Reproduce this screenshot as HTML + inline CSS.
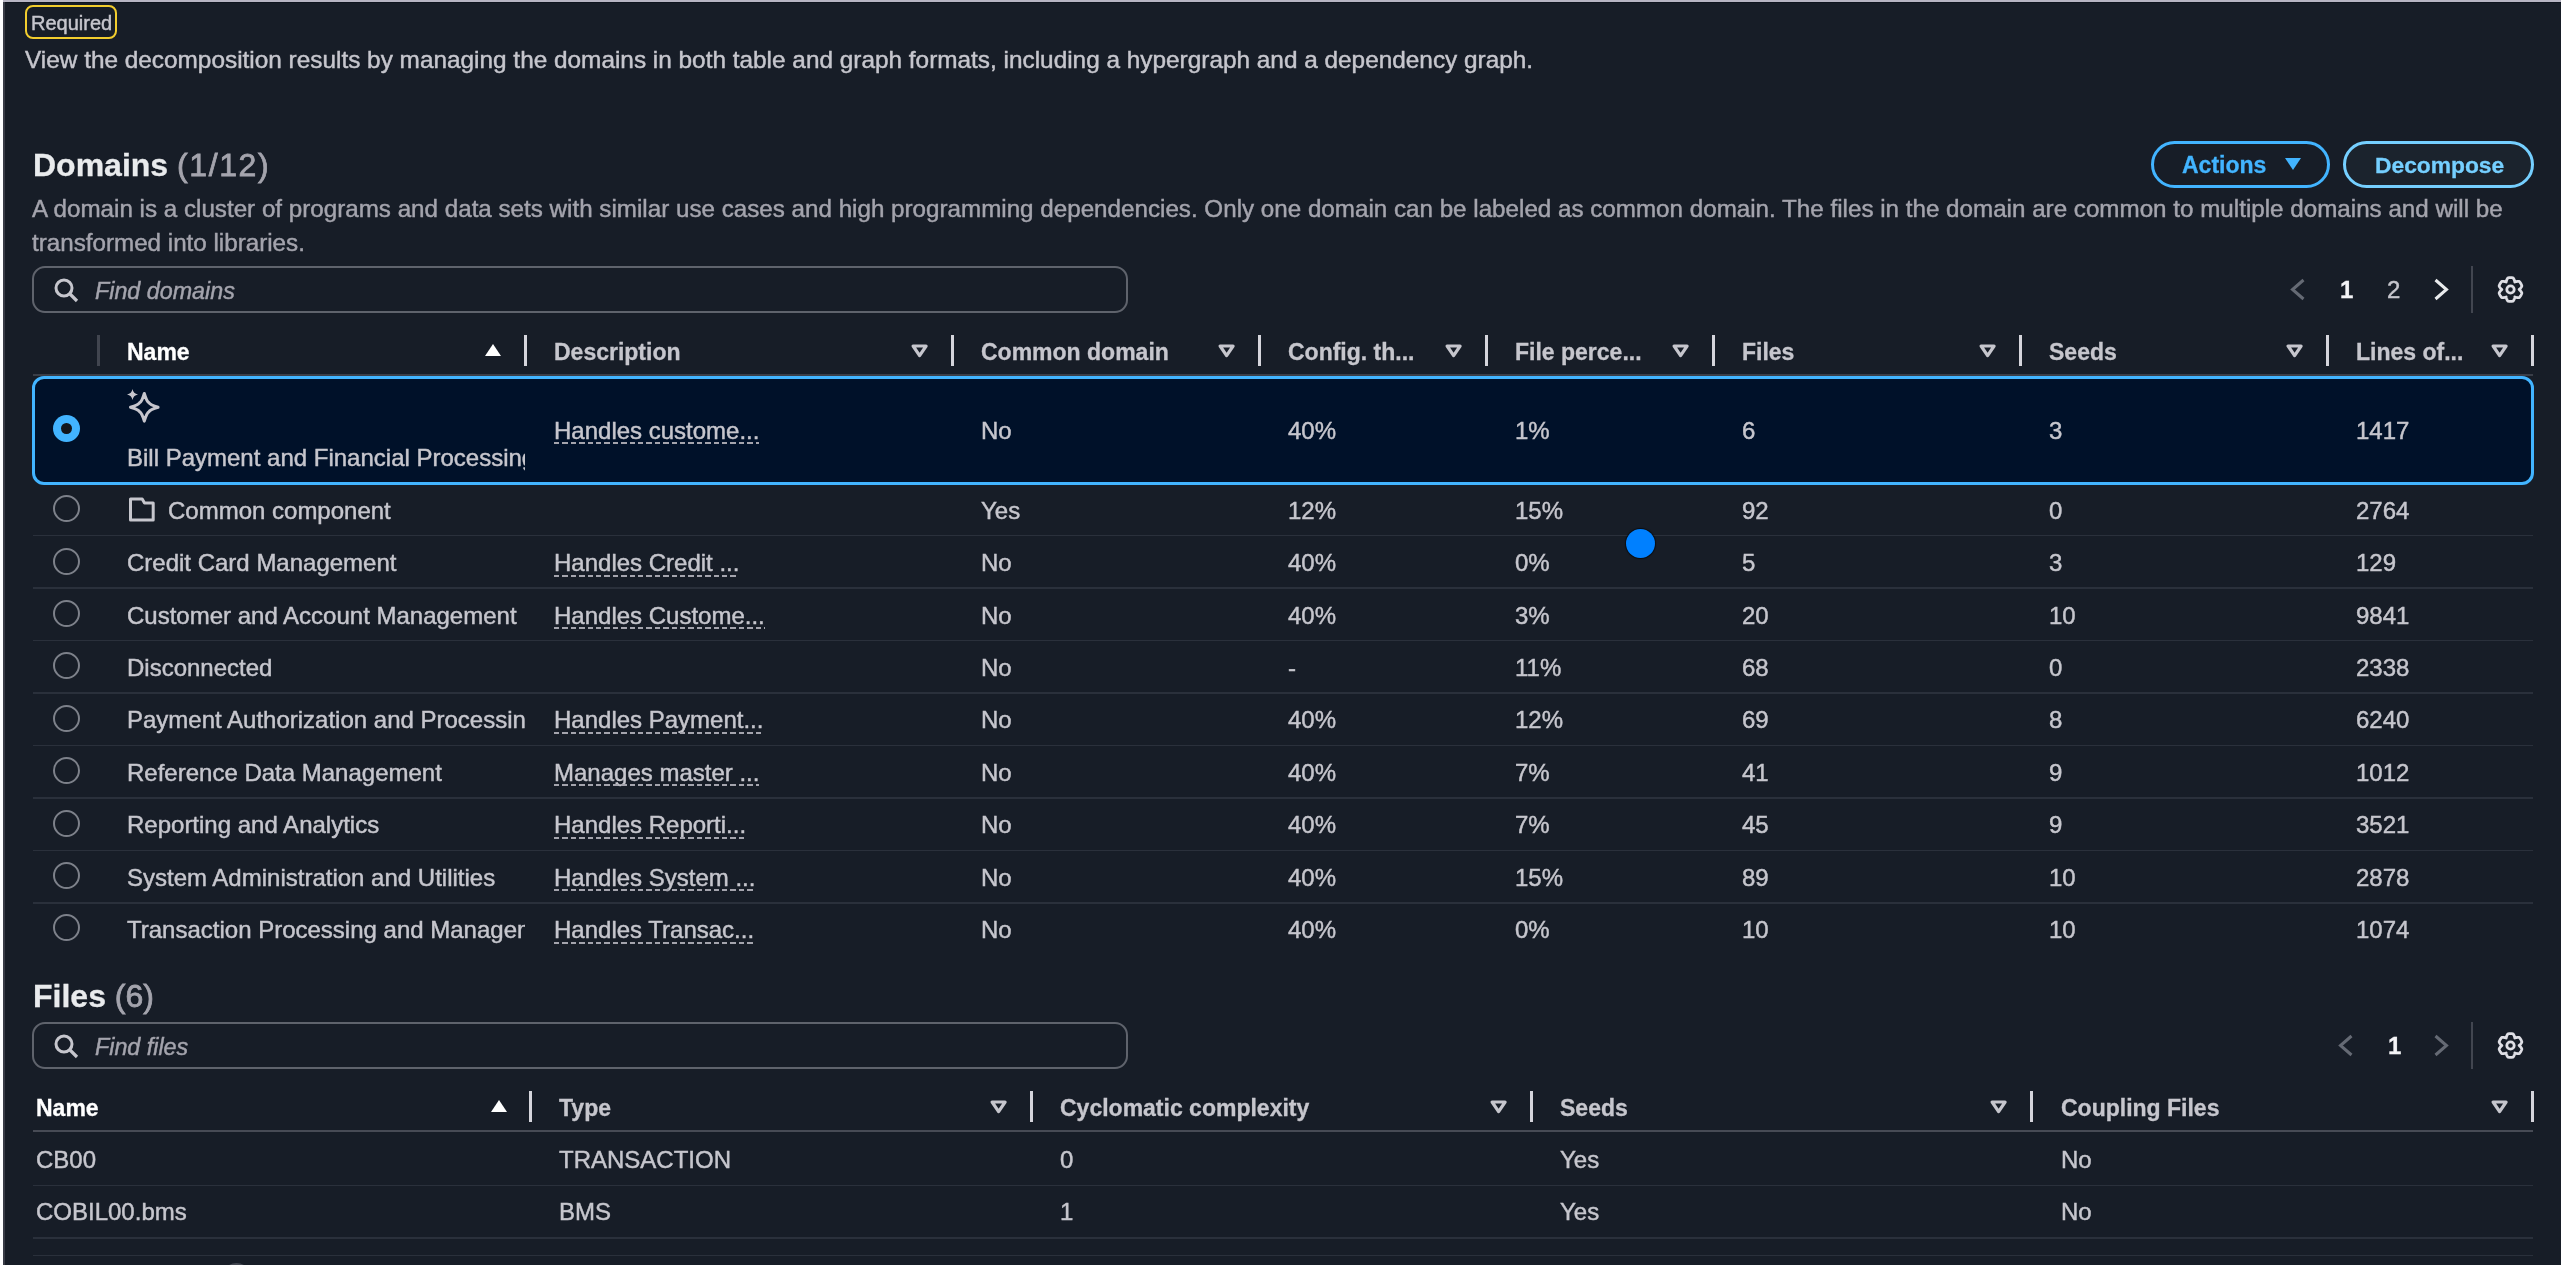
<!DOCTYPE html>
<html><head><meta charset="utf-8">
<style>
html,body{margin:0;padding:0}
body{width:2561px;height:1265px;overflow:hidden;background:#171d27;position:relative;font-family:"Liberation Sans",sans-serif;color:#c6c6cd}
.a{position:absolute}
.t{position:absolute;white-space:nowrap;font-size:24px;line-height:24px;-webkit-text-stroke:0.45px currentColor}
.t.b,.b{-webkit-text-stroke:0.3px currentColor}
.b{font-weight:bold}
.sec{color:#a4a4ad}
.hd{color:#c6c6cd;font-weight:bold}
.sep{position:absolute;width:3px;height:30px;background:#c6c6cd;border-radius:1px}
.rowline{position:absolute;height:2px;background:#262c36}
.radio{position:absolute;width:23px;height:23px;border:2px solid #8c8c94;border-radius:50%;box-sizing:content-box}
.lnk{position:relative}
.lnk:after{content:"";position:absolute;left:0;right:0;top:25.6px;height:2px;background:repeating-linear-gradient(90deg,#a4a4ad 0 5.4px,transparent 5.4px 8.4px)}
svg{position:absolute;overflow:visible}
</style></head><body><div id="root" style="position:absolute;left:0;top:0;width:2561px;height:1265px;will-change:transform;overflow:hidden">
<!-- frame edges -->
<div class="a" style="left:0;top:0;width:2561px;height:2px;background:#b7b5c3"></div>
<div class="a" style="left:0;top:2px;width:2561px;height:1px;background:#0e141e"></div>
<div class="a" style="left:0;top:0;width:3px;height:1265px;background:#fdfdfe"></div>
<div class="a" style="left:3px;top:2px;width:2px;height:1263px;background:#383b46"></div>

<!-- Required badge -->
<div class="a" style="left:25px;top:5px;width:88px;height:30px;border:2px solid #f2cd2e;border-radius:8px"></div>
<div class="t" style="left:31px;top:13px;font-size:20px;line-height:20px;color:#c6c6cd">Required</div>

<div class="t" style="left:25px;top:48px;color:#c6c6cd;font-size:24.37px">View the decomposition results by managing the domains in both table and graph formats, including a hypergraph and a dependency graph.</div>

<!-- Domains header -->
<div class="t b" style="left:33px;top:149px;font-size:32px;line-height:32px;color:#e9ebed">Domains <span style="font-weight:normal;color:#a4a4ad;letter-spacing:1.6px;-webkit-text-stroke:0.8px #a4a4ad">(1/12)</span></div>
<div class="t sec" style="left:32px;top:192px;line-height:34px;font-size:24.2px">A domain is a cluster of programs and data sets with similar use cases and high programming dependencies. Only one domain can be labeled as common domain. The files in the domain are common to multiple domains and will be<br>transformed into libraries.</div>

<!-- buttons -->
<div class="a" style="left:2151px;top:141px;width:175px;height:44px;border:3px solid #42b4ff;border-radius:24px;box-sizing:border-box;width:179px;height:47px"></div>
<div class="t b" style="left:2182px;top:153px;color:#42b4ff;font-size:23px">Actions</div>
<svg style="left:2284px;top:157px" width="18" height="14"><path d="M1 1 L17 1 L9 13 Z" fill="#42b4ff"/></svg>
<div class="a" style="left:2343px;top:141px;width:191px;height:47px;border:3px solid #75cfff;border-radius:24px;box-sizing:border-box;background:#1b232d"></div>
<div class="t b" style="left:2375px;top:153px;color:#75cfff;font-size:22.8px">Decompose</div>

<!-- search domains -->
<div class="a" style="left:32px;top:266px;width:1096px;height:47px;border:2px solid #5f636c;border-radius:13px;box-sizing:border-box"></div>
<svg style="left:54px;top:278px" width="25" height="25"><circle cx="10" cy="10" r="8" fill="none" stroke="#c6c6cd" stroke-width="3"/><path d="M16 16 L23 23" stroke="#c6c6cd" stroke-width="3.2"/></svg>
<div class="t sec" style="left:95px;top:279px;font-style:italic;font-size:23.3px">Find domains</div>

<!-- pagination domains -->
<svg style="left:2290px;top:278px" width="16" height="24"><path d="M13.5 2 L2.5 11.5 L13.5 21" fill="none" stroke="#656a74" stroke-width="3"/></svg>
<div class="t b" style="left:2340px;top:278px;color:#f4f4f7">1</div>
<div class="t" style="left:2387px;top:278px">2</div>
<svg style="left:2433px;top:278px" width="16" height="24"><path d="M2.5 2 L13.5 11.5 L2.5 21" fill="none" stroke="#e9ebed" stroke-width="3"/></svg>
<div class="a" style="left:2471px;top:266px;width:2px;height:47px;background:#424650"></div>
<svg style="left:2497px;top:276px" width="27" height="27"><g fill="none" stroke="#dfdfe5" stroke-width="2.8" stroke-linejoin="round"><path d="M22.10 13.50 L22.48 13.19 L22.85 12.85 L23.21 12.48 L23.55 12.09 L23.88 11.67 L24.19 11.23 L24.48 10.76 L24.75 10.27 L24.82 9.82 L24.68 9.43 L24.53 9.04 L24.37 8.66 L24.20 8.28 L24.01 7.91 L23.81 7.55 L23.59 7.19 L23.37 6.85 L23.13 6.51 L22.88 6.17 L22.62 5.85 L22.34 5.54 L21.92 5.37 L21.36 5.36 L20.81 5.38 L20.28 5.42 L19.75 5.50 L19.24 5.60 L18.74 5.73 L18.26 5.88 L17.80 6.05 L17.72 5.56 L17.61 5.07 L17.47 4.58 L17.30 4.09 L17.11 3.59 L16.88 3.11 L16.62 2.62 L16.33 2.14 L15.97 1.86 L15.57 1.78 L15.16 1.72 L14.74 1.67 L14.33 1.63 L13.92 1.61 L13.50 1.60 L13.08 1.61 L12.67 1.63 L12.26 1.67 L11.84 1.72 L11.43 1.78 L11.03 1.86 L10.67 2.14 L10.38 2.62 L10.12 3.11 L9.89 3.59 L9.70 4.09 L9.53 4.58 L9.39 5.07 L9.28 5.56 L9.20 6.05 L8.74 5.88 L8.26 5.73 L7.76 5.60 L7.25 5.50 L6.72 5.42 L6.19 5.38 L5.64 5.36 L5.08 5.37 L4.66 5.54 L4.38 5.85 L4.12 6.17 L3.87 6.51 L3.63 6.85 L3.41 7.19 L3.19 7.55 L2.99 7.91 L2.80 8.28 L2.63 8.66 L2.47 9.04 L2.32 9.43 L2.18 9.82 L2.25 10.27 L2.52 10.76 L2.81 11.23 L3.12 11.67 L3.45 12.09 L3.79 12.48 L4.15 12.85 L4.52 13.19 L4.90 13.50 L4.52 13.81 L4.15 14.15 L3.79 14.52 L3.45 14.91 L3.12 15.33 L2.81 15.77 L2.52 16.24 L2.25 16.73 L2.18 17.18 L2.32 17.57 L2.47 17.96 L2.63 18.34 L2.80 18.72 L2.99 19.09 L3.19 19.45 L3.41 19.81 L3.63 20.15 L3.87 20.49 L4.12 20.83 L4.38 21.15 L4.66 21.46 L5.08 21.63 L5.64 21.64 L6.19 21.62 L6.72 21.58 L7.25 21.50 L7.76 21.40 L8.26 21.27 L8.74 21.12 L9.20 20.95 L9.28 21.44 L9.39 21.93 L9.53 22.42 L9.70 22.91 L9.89 23.41 L10.12 23.89 L10.38 24.38 L10.67 24.86 L11.03 25.14 L11.43 25.22 L11.84 25.28 L12.26 25.33 L12.67 25.37 L13.08 25.39 L13.50 25.40 L13.92 25.39 L14.33 25.37 L14.74 25.33 L15.16 25.28 L15.57 25.22 L15.97 25.14 L16.33 24.86 L16.62 24.38 L16.88 23.89 L17.11 23.41 L17.30 22.91 L17.47 22.42 L17.61 21.93 L17.72 21.44 L17.80 20.95 L18.26 21.12 L18.74 21.27 L19.24 21.40 L19.75 21.50 L20.28 21.58 L20.81 21.62 L21.36 21.64 L21.92 21.63 L22.34 21.46 L22.62 21.15 L22.88 20.83 L23.13 20.49 L23.37 20.15 L23.59 19.81 L23.81 19.45 L24.01 19.09 L24.20 18.72 L24.37 18.34 L24.53 17.96 L24.68 17.57 L24.82 17.18 L24.75 16.73 L24.48 16.24 L24.19 15.77 L23.88 15.33 L23.55 14.91 L23.21 14.52 L22.85 14.15 L22.48 13.81 Z"/><circle cx="13.5" cy="13.5" r="3.7"/></g></svg>


<div class="a" style="left:97px;top:335px;width:3px;height:31px;background:#41454f"></div>
<div class="t b" style="left:127px;top:339.5px;color:#ffffff;font-size:23px">Name</div>
<div class="a" style="left:523.5px;top:335px;width:3.5px;height:31px;background:#d5d5dc"></div>
<svg style="left:484px;top:343px" width="18" height="15"><path d="M1 13 L9 1 L17 13 Z" fill="#ffffff"/></svg>
<div class="t b" style="left:554px;top:339.5px;color:#c6c6cd;font-size:23px">Description</div>
<div class="a" style="left:950.5px;top:335px;width:3.5px;height:31px;background:#d5d5dc"></div>
<svg style="left:910.5px;top:343.5px" width="18" height="15"><path d="M2.1 2 H15.1 L8.6 11.6 Z" fill="none" stroke="#c6c6cd" stroke-width="3.2" stroke-linejoin="round"/></svg>
<div class="t b" style="left:981px;top:339.5px;color:#c6c6cd;font-size:23px">Common domain</div>
<div class="a" style="left:1257.5px;top:335px;width:3.5px;height:31px;background:#d5d5dc"></div>
<svg style="left:1217.5px;top:343.5px" width="18" height="15"><path d="M2.1 2 H15.1 L8.6 11.6 Z" fill="none" stroke="#c6c6cd" stroke-width="3.2" stroke-linejoin="round"/></svg>
<div class="t b" style="left:1288px;top:339.5px;color:#c6c6cd;font-size:23px">Config. th...</div>
<div class="a" style="left:1484.5px;top:335px;width:3.5px;height:31px;background:#d5d5dc"></div>
<svg style="left:1444.5px;top:343.5px" width="18" height="15"><path d="M2.1 2 H15.1 L8.6 11.6 Z" fill="none" stroke="#c6c6cd" stroke-width="3.2" stroke-linejoin="round"/></svg>
<div class="t b" style="left:1515px;top:339.5px;color:#c6c6cd;font-size:23px">File perce...</div>
<div class="a" style="left:1711.5px;top:335px;width:3.5px;height:31px;background:#d5d5dc"></div>
<svg style="left:1671.5px;top:343.5px" width="18" height="15"><path d="M2.1 2 H15.1 L8.6 11.6 Z" fill="none" stroke="#c6c6cd" stroke-width="3.2" stroke-linejoin="round"/></svg>
<div class="t b" style="left:1742px;top:339.5px;color:#c6c6cd;font-size:23px">Files</div>
<div class="a" style="left:2018.5px;top:335px;width:3.5px;height:31px;background:#d5d5dc"></div>
<svg style="left:1978.5px;top:343.5px" width="18" height="15"><path d="M2.1 2 H15.1 L8.6 11.6 Z" fill="none" stroke="#c6c6cd" stroke-width="3.2" stroke-linejoin="round"/></svg>
<div class="t b" style="left:2049px;top:339.5px;color:#c6c6cd;font-size:23px">Seeds</div>
<div class="a" style="left:2325.5px;top:335px;width:3.5px;height:31px;background:#d5d5dc"></div>
<svg style="left:2285.5px;top:343.5px" width="18" height="15"><path d="M2.1 2 H15.1 L8.6 11.6 Z" fill="none" stroke="#c6c6cd" stroke-width="3.2" stroke-linejoin="round"/></svg>
<div class="t b" style="left:2356px;top:339.5px;color:#c6c6cd;font-size:23px">Lines of...</div>
<div class="a" style="left:2530.5px;top:335px;width:3.5px;height:31px;background:#d5d5dc"></div>
<svg style="left:2490.5px;top:343.5px" width="18" height="15"><path d="M2.1 2 H15.1 L8.6 11.6 Z" fill="none" stroke="#c6c6cd" stroke-width="3.2" stroke-linejoin="round"/></svg>
<div class="a" style="left:33px;top:374px;width:2500px;height:2px;background:#3a3e48"></div>
<div class="a" style="left:32px;top:376px;width:2502px;height:108.5px;border:3.5px solid #42b4ff;border-radius:12px;box-sizing:border-box;background:#001129"></div>
<div class="a" style="left:53px;top:414.75px;width:27px;height:27px;border-radius:50%;background:#42b4ff"></div>
<div class="a" style="left:61.1px;top:422.9px;width:10.8px;height:10.8px;border-radius:50%;background:#12161c"></div>
<svg style="left:127px;top:389px" width="34" height="36"><path d="M17.3 4.5 Q19.830000000000002 12.780000000000001 21.9 13.700000000000001 Q22.82 15.770000000000001 31.1 18.3 Q22.82 20.830000000000002 21.9 22.9 Q19.830000000000002 23.82 17.3 32.1 Q14.770000000000001 23.82 12.700000000000001 22.9 Q11.780000000000001 20.830000000000002 3.5 18.3 Q11.780000000000001 15.770000000000001 12.700000000000001 13.700000000000001 Q14.770000000000001 12.780000000000001 17.3 4.5 Z" fill="none" stroke="#c6c6cd" stroke-width="3" stroke-linejoin="round"/><path d="M5.5 0 Q6.3 4.6 11 5.5 Q6.3 6.4 5.5 11 Q4.7 6.4 0 5.5 Q4.7 4.6 5.5 0 Z" fill="#c6c6cd"/></svg>
<div class="a" style="left:127px;top:440.59999999999997px;width:398px;height:34px;overflow:hidden"><div class="t" style="left:0;top:5px">Bill Payment and Financial Processing</div></div>
<div class="t " style="left:554px;top:418.8px;"><span class="lnk">Handles custome...</span></div>
<div class="t " style="left:981px;top:418.8px;">No</div>
<div class="t " style="left:1288px;top:418.8px;">40%</div>
<div class="t " style="left:1515px;top:418.8px;">1%</div>
<div class="t " style="left:1742px;top:418.8px;">6</div>
<div class="t " style="left:2049px;top:418.8px;">3</div>
<div class="t " style="left:2356px;top:418.8px;">1417</div>
<div class="a" style="left:53px;top:495.3px;width:23px;height:23px;border:2px solid #7d818a;border-radius:50%"></div>
<svg style="left:127px;top:495.1px" width="30" height="30"><path d="M3.5 25.1 V3.9 H15.2 L17.5 8 H26.2 V25.1 Z" fill="none" stroke="#c6c6cd" stroke-width="3" stroke-linejoin="round"/></svg>
<div class="t " style="left:168px;top:498.8px;">Common component</div>
<div class="t " style="left:981px;top:498.8px;">Yes</div>
<div class="t " style="left:1288px;top:498.8px;">12%</div>
<div class="t " style="left:1515px;top:498.8px;">15%</div>
<div class="t " style="left:1742px;top:498.8px;">92</div>
<div class="t " style="left:2049px;top:498.8px;">0</div>
<div class="t " style="left:2356px;top:498.8px;">2764</div>
<div class="a" style="left:33px;top:534.75px;width:2500px;height:1.5px;background:#2a303b"></div>
<div class="a" style="left:53px;top:547.69px;width:23px;height:23px;border:2px solid #7d818a;border-radius:50%"></div>
<div class="a" style="left:127px;top:546.19px;width:398px;height:34px;overflow:hidden"><div class="t" style="left:0;top:5px">Credit Card Management</div></div>
<div class="t " style="left:554px;top:551.19px;"><span class="lnk">Handles Credit ...</span></div>
<div class="t " style="left:981px;top:551.19px;">No</div>
<div class="t " style="left:1288px;top:551.19px;">40%</div>
<div class="t " style="left:1515px;top:551.19px;">0%</div>
<div class="t " style="left:1742px;top:551.19px;">5</div>
<div class="t " style="left:2049px;top:551.19px;">3</div>
<div class="t " style="left:2356px;top:551.19px;">129</div>
<div class="a" style="left:33px;top:587.25px;width:2500px;height:1.5px;background:#2a303b"></div>
<div class="a" style="left:53px;top:600.08px;width:23px;height:23px;border:2px solid #7d818a;border-radius:50%"></div>
<div class="a" style="left:127px;top:598.58px;width:398px;height:34px;overflow:hidden"><div class="t" style="left:0;top:5px">Customer and Account Management</div></div>
<div class="t " style="left:554px;top:603.58px;"><span class="lnk">Handles Custome...</span></div>
<div class="t " style="left:981px;top:603.58px;">No</div>
<div class="t " style="left:1288px;top:603.58px;">40%</div>
<div class="t " style="left:1515px;top:603.58px;">3%</div>
<div class="t " style="left:1742px;top:603.58px;">20</div>
<div class="t " style="left:2049px;top:603.58px;">10</div>
<div class="t " style="left:2356px;top:603.58px;">9841</div>
<div class="a" style="left:33px;top:639.75px;width:2500px;height:1.5px;background:#2a303b"></div>
<div class="a" style="left:53px;top:652.47px;width:23px;height:23px;border:2px solid #7d818a;border-radius:50%"></div>
<div class="a" style="left:127px;top:650.97px;width:398px;height:34px;overflow:hidden"><div class="t" style="left:0;top:5px">Disconnected</div></div>
<div class="t " style="left:981px;top:655.97px;">No</div>
<div class="t " style="left:1288px;top:655.97px;">-</div>
<div class="t " style="left:1515px;top:655.97px;">11%</div>
<div class="t " style="left:1742px;top:655.97px;">68</div>
<div class="t " style="left:2049px;top:655.97px;">0</div>
<div class="t " style="left:2356px;top:655.97px;">2338</div>
<div class="a" style="left:33px;top:692.25px;width:2500px;height:1.5px;background:#2a303b"></div>
<div class="a" style="left:53px;top:704.8600000000001px;width:23px;height:23px;border:2px solid #7d818a;border-radius:50%"></div>
<div class="a" style="left:127px;top:703.3600000000001px;width:398px;height:34px;overflow:hidden"><div class="t" style="left:0;top:5px">Payment Authorization and Processing</div></div>
<div class="t " style="left:554px;top:708.3600000000001px;"><span class="lnk">Handles Payment...</span></div>
<div class="t " style="left:981px;top:708.3600000000001px;">No</div>
<div class="t " style="left:1288px;top:708.3600000000001px;">40%</div>
<div class="t " style="left:1515px;top:708.3600000000001px;">12%</div>
<div class="t " style="left:1742px;top:708.3600000000001px;">69</div>
<div class="t " style="left:2049px;top:708.3600000000001px;">8</div>
<div class="t " style="left:2356px;top:708.3600000000001px;">6240</div>
<div class="a" style="left:33px;top:744.75px;width:2500px;height:1.5px;background:#2a303b"></div>
<div class="a" style="left:53px;top:757.25px;width:23px;height:23px;border:2px solid #7d818a;border-radius:50%"></div>
<div class="a" style="left:127px;top:755.75px;width:398px;height:34px;overflow:hidden"><div class="t" style="left:0;top:5px">Reference Data Management</div></div>
<div class="t " style="left:554px;top:760.75px;"><span class="lnk">Manages master ...</span></div>
<div class="t " style="left:981px;top:760.75px;">No</div>
<div class="t " style="left:1288px;top:760.75px;">40%</div>
<div class="t " style="left:1515px;top:760.75px;">7%</div>
<div class="t " style="left:1742px;top:760.75px;">41</div>
<div class="t " style="left:2049px;top:760.75px;">9</div>
<div class="t " style="left:2356px;top:760.75px;">1012</div>
<div class="a" style="left:33px;top:797.25px;width:2500px;height:1.5px;background:#2a303b"></div>
<div class="a" style="left:53px;top:809.6400000000001px;width:23px;height:23px;border:2px solid #7d818a;border-radius:50%"></div>
<div class="a" style="left:127px;top:808.1400000000001px;width:398px;height:34px;overflow:hidden"><div class="t" style="left:0;top:5px">Reporting and Analytics</div></div>
<div class="t " style="left:554px;top:813.1400000000001px;"><span class="lnk">Handles Reporti...</span></div>
<div class="t " style="left:981px;top:813.1400000000001px;">No</div>
<div class="t " style="left:1288px;top:813.1400000000001px;">40%</div>
<div class="t " style="left:1515px;top:813.1400000000001px;">7%</div>
<div class="t " style="left:1742px;top:813.1400000000001px;">45</div>
<div class="t " style="left:2049px;top:813.1400000000001px;">9</div>
<div class="t " style="left:2356px;top:813.1400000000001px;">3521</div>
<div class="a" style="left:33px;top:849.75px;width:2500px;height:1.5px;background:#2a303b"></div>
<div class="a" style="left:53px;top:862.0300000000001px;width:23px;height:23px;border:2px solid #7d818a;border-radius:50%"></div>
<div class="a" style="left:127px;top:860.5300000000001px;width:398px;height:34px;overflow:hidden"><div class="t" style="left:0;top:5px">System Administration and Utilities</div></div>
<div class="t " style="left:554px;top:865.5300000000001px;"><span class="lnk">Handles System ...</span></div>
<div class="t " style="left:981px;top:865.5300000000001px;">No</div>
<div class="t " style="left:1288px;top:865.5300000000001px;">40%</div>
<div class="t " style="left:1515px;top:865.5300000000001px;">15%</div>
<div class="t " style="left:1742px;top:865.5300000000001px;">89</div>
<div class="t " style="left:2049px;top:865.5300000000001px;">10</div>
<div class="t " style="left:2356px;top:865.5300000000001px;">2878</div>
<div class="a" style="left:33px;top:902.25px;width:2500px;height:1.5px;background:#2a303b"></div>
<div class="a" style="left:53px;top:914.4200000000001px;width:23px;height:23px;border:2px solid #7d818a;border-radius:50%"></div>
<div class="a" style="left:127px;top:912.9200000000001px;width:398px;height:34px;overflow:hidden"><div class="t" style="left:0;top:5px">Transaction Processing and Management</div></div>
<div class="t " style="left:554px;top:917.9200000000001px;"><span class="lnk">Handles Transac...</span></div>
<div class="t " style="left:981px;top:917.9200000000001px;">No</div>
<div class="t " style="left:1288px;top:917.9200000000001px;">40%</div>
<div class="t " style="left:1515px;top:917.9200000000001px;">0%</div>
<div class="t " style="left:1742px;top:917.9200000000001px;">10</div>
<div class="t " style="left:2049px;top:917.9200000000001px;">10</div>
<div class="t " style="left:2356px;top:917.9200000000001px;">1074</div>
<div class="a" style="left:1626px;top:529px;width:29px;height:29px;border-radius:50%;background:#0080ff;box-shadow:0 0 1px 1px rgba(0,0,0,.6)"></div>
<div class="t b" style="left:33px;top:980px;font-size:32px;line-height:32px;color:#e9ebed">Files <span style="font-weight:normal;color:#a4a4ad;-webkit-text-stroke:0.8px #a4a4ad">(6)</span></div>
<div class="a" style="left:32px;top:1022px;width:1096px;height:47px;border:2px solid #5f636c;border-radius:13px;box-sizing:border-box"></div>
<svg style="left:54px;top:1034px" width="25" height="25"><circle cx="10" cy="10" r="8" fill="none" stroke="#c6c6cd" stroke-width="3"/><path d="M16 16 L23 23" stroke="#c6c6cd" stroke-width="3.2"/></svg>
<div class="t sec" style="left:95px;top:1035px;font-style:italic;font-size:23.3px">Find files</div>
<svg style="left:2338px;top:1034px" width="16" height="24"><path d="M13.5 2 L2.5 11.5 L13.5 21" fill="none" stroke="#656a74" stroke-width="3"/></svg>
<div class="t b" style="left:2388px;top:1034px;color:#f4f4f7">1</div>
<svg style="left:2433px;top:1034px" width="16" height="24"><path d="M2.5 2 L13.5 11.5 L2.5 21" fill="none" stroke="#656a74" stroke-width="3"/></svg>
<div class="a" style="left:2471px;top:1022px;width:2px;height:47px;background:#424650"></div>
<svg style="left:2497px;top:1032px" width="27" height="27"><g fill="none" stroke="#dfdfe5" stroke-width="2.8" stroke-linejoin="round"><path d="M22.10 13.50 L22.48 13.19 L22.85 12.85 L23.21 12.48 L23.55 12.09 L23.88 11.67 L24.19 11.23 L24.48 10.76 L24.75 10.27 L24.82 9.82 L24.68 9.43 L24.53 9.04 L24.37 8.66 L24.20 8.28 L24.01 7.91 L23.81 7.55 L23.59 7.19 L23.37 6.85 L23.13 6.51 L22.88 6.17 L22.62 5.85 L22.34 5.54 L21.92 5.37 L21.36 5.36 L20.81 5.38 L20.28 5.42 L19.75 5.50 L19.24 5.60 L18.74 5.73 L18.26 5.88 L17.80 6.05 L17.72 5.56 L17.61 5.07 L17.47 4.58 L17.30 4.09 L17.11 3.59 L16.88 3.11 L16.62 2.62 L16.33 2.14 L15.97 1.86 L15.57 1.78 L15.16 1.72 L14.74 1.67 L14.33 1.63 L13.92 1.61 L13.50 1.60 L13.08 1.61 L12.67 1.63 L12.26 1.67 L11.84 1.72 L11.43 1.78 L11.03 1.86 L10.67 2.14 L10.38 2.62 L10.12 3.11 L9.89 3.59 L9.70 4.09 L9.53 4.58 L9.39 5.07 L9.28 5.56 L9.20 6.05 L8.74 5.88 L8.26 5.73 L7.76 5.60 L7.25 5.50 L6.72 5.42 L6.19 5.38 L5.64 5.36 L5.08 5.37 L4.66 5.54 L4.38 5.85 L4.12 6.17 L3.87 6.51 L3.63 6.85 L3.41 7.19 L3.19 7.55 L2.99 7.91 L2.80 8.28 L2.63 8.66 L2.47 9.04 L2.32 9.43 L2.18 9.82 L2.25 10.27 L2.52 10.76 L2.81 11.23 L3.12 11.67 L3.45 12.09 L3.79 12.48 L4.15 12.85 L4.52 13.19 L4.90 13.50 L4.52 13.81 L4.15 14.15 L3.79 14.52 L3.45 14.91 L3.12 15.33 L2.81 15.77 L2.52 16.24 L2.25 16.73 L2.18 17.18 L2.32 17.57 L2.47 17.96 L2.63 18.34 L2.80 18.72 L2.99 19.09 L3.19 19.45 L3.41 19.81 L3.63 20.15 L3.87 20.49 L4.12 20.83 L4.38 21.15 L4.66 21.46 L5.08 21.63 L5.64 21.64 L6.19 21.62 L6.72 21.58 L7.25 21.50 L7.76 21.40 L8.26 21.27 L8.74 21.12 L9.20 20.95 L9.28 21.44 L9.39 21.93 L9.53 22.42 L9.70 22.91 L9.89 23.41 L10.12 23.89 L10.38 24.38 L10.67 24.86 L11.03 25.14 L11.43 25.22 L11.84 25.28 L12.26 25.33 L12.67 25.37 L13.08 25.39 L13.50 25.40 L13.92 25.39 L14.33 25.37 L14.74 25.33 L15.16 25.28 L15.57 25.22 L15.97 25.14 L16.33 24.86 L16.62 24.38 L16.88 23.89 L17.11 23.41 L17.30 22.91 L17.47 22.42 L17.61 21.93 L17.72 21.44 L17.80 20.95 L18.26 21.12 L18.74 21.27 L19.24 21.40 L19.75 21.50 L20.28 21.58 L20.81 21.62 L21.36 21.64 L21.92 21.63 L22.34 21.46 L22.62 21.15 L22.88 20.83 L23.13 20.49 L23.37 20.15 L23.59 19.81 L23.81 19.45 L24.01 19.09 L24.20 18.72 L24.37 18.34 L24.53 17.96 L24.68 17.57 L24.82 17.18 L24.75 16.73 L24.48 16.24 L24.19 15.77 L23.88 15.33 L23.55 14.91 L23.21 14.52 L22.85 14.15 L22.48 13.81 Z"/><circle cx="13.5" cy="13.5" r="3.7"/></g></svg>
<div class="t b" style="left:36px;top:1096.2px;color:#ffffff;font-size:23px">Name</div>
<div class="a" style="left:528.5px;top:1091px;width:3.5px;height:31px;background:#d5d5dc"></div>
<svg style="left:490px;top:1099px" width="18" height="15"><path d="M1 13 L9 1 L17 13 Z" fill="#ffffff"/></svg>
<div class="t b" style="left:559px;top:1096.2px;color:#c6c6cd;font-size:23px">Type</div>
<div class="a" style="left:1029.5px;top:1091px;width:3.5px;height:31px;background:#d5d5dc"></div>
<svg style="left:989.5px;top:1099.5px" width="18" height="15"><path d="M2.1 2 H15.1 L8.6 11.6 Z" fill="none" stroke="#c6c6cd" stroke-width="3.2" stroke-linejoin="round"/></svg>
<div class="t b" style="left:1060px;top:1096.2px;color:#c6c6cd;font-size:23px">Cyclomatic complexity</div>
<div class="a" style="left:1529.5px;top:1091px;width:3.5px;height:31px;background:#d5d5dc"></div>
<svg style="left:1489.5px;top:1099.5px" width="18" height="15"><path d="M2.1 2 H15.1 L8.6 11.6 Z" fill="none" stroke="#c6c6cd" stroke-width="3.2" stroke-linejoin="round"/></svg>
<div class="t b" style="left:1560px;top:1096.2px;color:#c6c6cd;font-size:23px">Seeds</div>
<div class="a" style="left:2029.5px;top:1091px;width:3.5px;height:31px;background:#d5d5dc"></div>
<svg style="left:1989.5px;top:1099.5px" width="18" height="15"><path d="M2.1 2 H15.1 L8.6 11.6 Z" fill="none" stroke="#c6c6cd" stroke-width="3.2" stroke-linejoin="round"/></svg>
<div class="t b" style="left:2061px;top:1096.2px;color:#c6c6cd;font-size:23px">Coupling Files</div>
<div class="a" style="left:2530.5px;top:1091px;width:3.5px;height:31px;background:#d5d5dc"></div>
<svg style="left:2490.5px;top:1099.5px" width="18" height="15"><path d="M2.1 2 H15.1 L8.6 11.6 Z" fill="none" stroke="#c6c6cd" stroke-width="3.2" stroke-linejoin="round"/></svg>
<div class="a" style="left:33px;top:1130px;width:2500px;height:2px;background:#474b55"></div>
<div class="t " style="left:36px;top:1147.7px;">CB00</div>
<div class="t " style="left:559px;top:1147.7px;">TRANSACTION</div>
<div class="t " style="left:1060px;top:1147.7px;">0</div>
<div class="t " style="left:1560px;top:1147.7px;">Yes</div>
<div class="t " style="left:2061px;top:1147.7px;">No</div>
<div class="t " style="left:36px;top:1200.1000000000001px;">COBIL00.bms</div>
<div class="t " style="left:559px;top:1200.1000000000001px;">BMS</div>
<div class="t " style="left:1060px;top:1200.1000000000001px;">1</div>
<div class="t " style="left:1560px;top:1200.1000000000001px;">Yes</div>
<div class="t " style="left:2061px;top:1200.1000000000001px;">No</div>
<div class="a" style="left:33px;top:1184.5px;width:2500px;height:1.5px;background:#2a303b"></div>
<div class="a" style="left:33px;top:1237px;width:2500px;height:1.5px;background:#2a303b"></div>
<div class="a" style="left:33px;top:1254.5px;width:2500px;height:1.5px;background:#2a303b"></div>
<div class="a" style="left:222px;top:1262.8px;width:29px;height:29px;border-radius:50%;background:#444852"></div>
</div></body></html>
